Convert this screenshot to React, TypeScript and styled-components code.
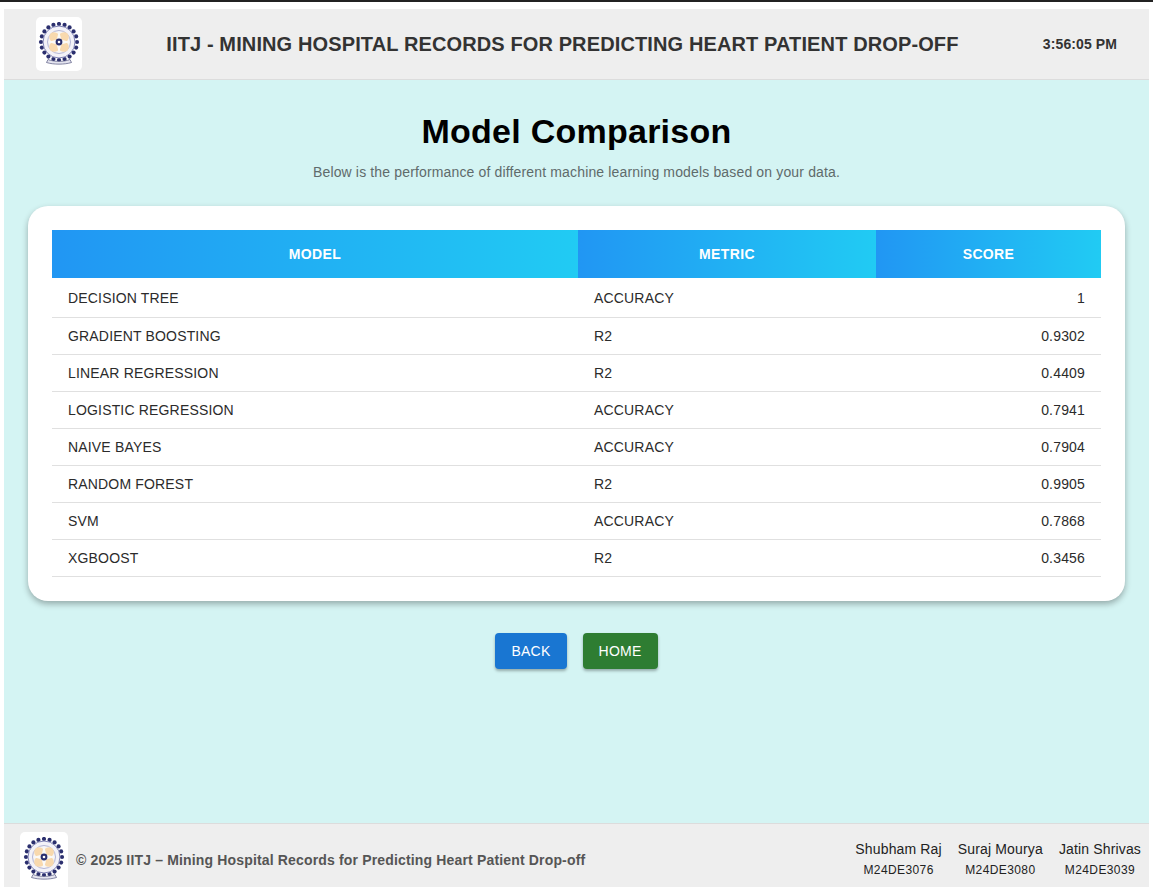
import React from 'react'
import styled, { createGlobalStyle } from 'styled-components'

const rows = [
  { model: 'Decision Tree', metric: 'Accuracy', score: '1' },
  { model: 'Gradient Boosting', metric: 'R2', score: '0.9302' },
  { model: 'Linear Regression', metric: 'R2', score: '0.4409' },
  { model: 'Logistic Regression', metric: 'Accuracy', score: '0.7941' },
  { model: 'Naive Bayes', metric: 'Accuracy', score: '0.7904' },
  { model: 'Random Forest', metric: 'R2', score: '0.9905' },
  { model: 'SVM', metric: 'Accuracy', score: '0.7868' },
  { model: 'XGBoost', metric: 'R2', score: '0.3456' },
]

const authors = [
  { name: 'Shubham Raj', id: 'M24DE3076' },
  { name: 'Suraj Mourya', id: 'M24DE3080' },
  { name: 'Jatin Shrivas', id: 'M24DE3039' },
]

const Emblem = () => {
  const dots = Array.from({ length: 20 }, (_, i) => (i * Math.PI * 2) / 20)
  const petals = [0, 90, 180, 270]
  return (
    <svg width="44" height="44" viewBox="0 0 44 44">
      {dots.map((a, i) => (
        <circle key={i} cx={22 + 18 * Math.cos(a)} cy={20 + 18 * Math.sin(a)} r="2.1" fill="#2b2f6e" />
      ))}
      <circle cx="22" cy="20" r="16" fill="#f3f2f8" stroke="#7f82b4" strokeWidth="1" />
      <circle cx="22" cy="20" r="11.500" fill="#f7f5f4" stroke="#b4b6d6" strokeWidth="1" />
      {petals.map((r) => (
        <ellipse key={r} cx="22" cy="13.500" rx="5" ry="5.500" fill="#f8d9ae" transform={`rotate(${45 + r} 22 20)`} />
      ))}
      <path d="M22 9l3 11-3 11-3-11zM11 20l11-3 11 3-11 3z" fill="#fbfaf7" />
      <circle cx="22" cy="20" r="3.400" fill="#2b2f6e" />
      <circle cx="22" cy="20" r="1.300" fill="#ffffff" />
      <path d="M11 37.500c6 2.500 16 2.500 22 0l1.500 3c-7 2.200-18 2.200-25 0z" fill="#e4e4ef" stroke="#55587f" strokeWidth="0.7" />
    </svg>
  )
}

export default function App() {
  return (
    <>
      <GlobalStyle />
      <Page>
        <Header>
          <HeaderLogo>
            <Emblem />
          </HeaderLogo>
          <HeaderTitle>IITJ - Mining Hospital Records for Predicting Heart Patient Drop-off</HeaderTitle>
          <Clock>3:56:05 PM</Clock>
        </Header>
        <Main>
          <Title>Model Comparison</Title>
          <Subtitle>Below is the performance of different machine learning models based on your data.</Subtitle>
          <Card>
            <Table>
              <colgroup>
                <col width="526" />
                <col width="298" />
                <col width="225" />
              </colgroup>
              <thead>
                <tr>
                  <HeadCell>Model</HeadCell>
                  <HeadCell>Metric</HeadCell>
                  <HeadCell>Score</HeadCell>
                </tr>
              </thead>
              <tbody>
                {rows.map((row, i) => (
                  <tr key={row.model}>
                    <BodyCell $first={i === 0}>{row.model}</BodyCell>
                    <BodyCell $first={i === 0}>{row.metric}</BodyCell>
                    <BodyCell $first={i === 0} $right>
                      {row.score}
                    </BodyCell>
                  </tr>
                ))}
              </tbody>
            </Table>
          </Card>
          <Actions>
            <ActionButton $color="#1976d2">Back</ActionButton>
            <ActionButton $color="#2e7d32">Home</ActionButton>
          </Actions>
        </Main>
        <Footer>
          <FooterLeft>
            <FooterLogo>
              <Emblem />
            </FooterLogo>
            <FooterText>© 2025 IITJ – Mining Hospital Records for Predicting Heart Patient Drop-off</FooterText>
          </FooterLeft>
          <Authors>
            {authors.map((a) => (
              <Author key={a.id}>
                <AuthorName>{a.name}</AuthorName>
                <AuthorId>{a.id}</AuthorId>
              </Author>
            ))}
          </Authors>
        </Footer>
      </Page>
    </>
  )
}

const GlobalStyle = createGlobalStyle`
  html, body {
    margin: 0;
    padding: 0;
    background: #fff;
    font-family: "Liberation Sans", Arial, sans-serif;
  }
  * {
    box-sizing: border-box;
  }
`

const Page = styled.div`
  height: 887px;
  padding: 7px 4px 0;
  display: flex;
  flex-direction: column;
  overflow: hidden;
  border-top: 2px solid #222;
`

const Header = styled.header`
  height: 71px;
  flex-shrink: 0;
  padding: 0 32px;
  display: flex;
  align-items: center;
  background: #eeeeee;
  border-bottom: 1px solid #dcdcdc;
`

const HeaderLogo = styled.div`
  width: 46px;
  height: 54px;
  background: #fff;
  border-radius: 5px;
  display: flex;
  align-items: center;
  justify-content: center;
`

const HeaderTitle = styled.h1`
  flex: 1;
  margin: 0;
  font-size: 20px;
  font-weight: 700;
  letter-spacing: 0.12px;
  text-align: center;
  text-transform: uppercase;
  color: #333;
`

const Clock = styled.div`
  font-size: 14px;
  font-weight: 700;
  letter-spacing: 0.1px;
  color: #333;
`

const Main = styled.main`
  flex: 1;
  padding: 31px 24px 0;
  background: #d4f4f3;
  display: flex;
  flex-direction: column;
  align-items: center;
`

const Title = styled.h2`
  margin: 0;
  font-size: 34px;
  line-height: 40px;
  font-weight: 700;
  letter-spacing: 0.25px;
  color: #000;
`

const Subtitle = styled.p`
  margin: 13px 0 26px;
  font-size: 14px;
  line-height: 16px;
  letter-spacing: 0.15px;
  color: #5f6b6b;
`

const Card = styled.section`
  width: 100%;
  padding: 24px;
  background: #fff;
  border-radius: 20px;
  box-shadow: 0 3px 6px rgba(0, 0, 0, 0.3);
`

const Table = styled.table`
  width: 100%;
  border-collapse: collapse;
  table-layout: fixed;
`

const HeadCell = styled.th`
  height: 48px;
  padding: 0 16px;
  background: linear-gradient(90deg, #2196f3, #21cbf3);
  color: #fff;
  font-size: 14px;
  font-weight: 700;
  letter-spacing: 0.35px;
  text-align: center;
  text-transform: uppercase;
`

const BodyCell = styled.td<{ $first?: boolean; $right?: boolean }>`
  height: ${(p) => (p.$first ? '39px' : '37px')};
  padding: ${(p) => (p.$first ? '2px' : '0')} 16px 0;
  border-bottom: 1px solid #e0e0e0;
  font-size: 14px;
  letter-spacing: 0.17px;
  color: #2b2b2b;
  text-transform: uppercase;
  text-align: ${(p) => (p.$right ? 'right' : 'left')};
`

const Actions = styled.div`
  margin-top: 32px;
  display: flex;
  gap: 16px;
`

const ActionButton = styled.button<{ $color: string }>`
  height: 36px;
  padding: 0 16px;
  border: 0;
  border-radius: 4px;
  background: ${(p) => p.$color};
  color: #fff;
  font-family: inherit;
  font-size: 14px;
  letter-spacing: 0.25px;
  text-transform: uppercase;
  box-shadow: 0 2px 3px rgba(0, 0, 0, 0.3);
`

const Footer = styled.footer`
  height: 64px;
  flex-shrink: 0;
  padding: 8px 8px 0 16px;
  display: flex;
  justify-content: space-between;
  background: #eeeeee;
  border-top: 1px solid #dcdcdc;
`

const FooterLeft = styled.div`
  display: flex;
  align-items: center;
  gap: 8px;
  height: 56px;
`

const FooterLogo = styled.div`
  width: 48px;
  height: 56px;
  padding-bottom: 3px;
  background: #fff;
  border-radius: 5px 5px 0 0;
  display: flex;
  align-items: center;
  justify-content: center;
`

const FooterText = styled.span`
  font-size: 14px;
  font-weight: 700;
  letter-spacing: 0.16px;
  color: #555;
`

const Authors = styled.div`
  display: flex;
  gap: 16px;
  padding-top: 9px;
`

const Author = styled.div`
  display: flex;
  flex-direction: column;
  align-items: center;
`

const AuthorName = styled.span`
  font-size: 14px;
  line-height: 16px;
  letter-spacing: 0.15px;
  color: #222;
`

const AuthorId = styled.span`
  margin-top: 6px;
  font-size: 12px;
  line-height: 14px;
  letter-spacing: 0.4px;
  color: #222;
`
